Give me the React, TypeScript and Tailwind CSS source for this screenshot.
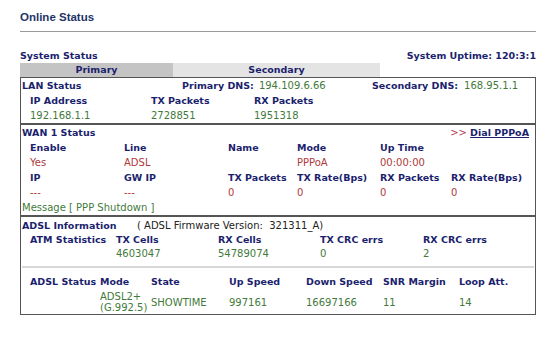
import React from "react";

const lbl = "font-bold text-[9.5px] text-[#1c1f6e]";
const grn = "text-[#3f7a3a]";
const red = "text-[#b03a3a]";

function Cell({ w, className, children }: { w: string; className?: string; children?: React.ReactNode }) {
  return <div className={`${w} shrink-0 whitespace-nowrap ${className ?? ""}`}>{children}</div>;
}

export default function App() {
  return (
    <div className="w-[560px] h-[349px] bg-white font-['DejaVu_Sans',sans-serif] text-[10px] leading-[15px] overflow-hidden">
      <div className="pl-[20px] pt-[9px] leading-[16px] font-['Liberation_Sans',sans-serif] text-[11.5px] font-bold text-[#1f3468]">
        Online Status
      </div>
      <div className="ml-[20px] mt-[6px] w-[516px] h-px bg-[#9a9a9a]" />

      <div className="ml-[20px] w-[516px] mt-[17px] flex justify-between leading-[14px]">
        <span className={lbl}>System Status</span>
        <span className={lbl}>System Uptime: 120:3:1</span>
      </div>

      <div className="ml-[20px] flex h-[14px] leading-[14px]">
        <div className={`w-[153px] bg-[#c4c4c4] text-center ${lbl}`}>Primary</div>
        <div className={`w-[207px] bg-[#e4e4e4] text-center ${lbl}`}>Secondary</div>
      </div>

      <div className="ml-[20px] w-[516px] border border-[#555]">
        {/* LAN */}
        <div>
          <div className="flex pl-[1px]">
            <Cell w="w-[160px]" className={lbl}>LAN Status</Cell>
            <div className="w-[190px] shrink-0 flex gap-[5px] whitespace-nowrap">
              <span className={lbl}>Primary DNS:</span>
              <span className={grn}>194.109.6.66</span>
            </div>
            <div className="flex gap-[6px] whitespace-nowrap">
              <span className={lbl}>Secondary DNS:</span>
              <span className={grn}>168.95.1.1</span>
            </div>
          </div>
          <div className="flex pl-[9px]">
            <Cell w="w-[121px]" className={lbl}>IP Address</Cell>
            <Cell w="w-[103px]" className={lbl}>TX Packets</Cell>
            <Cell w="w-[100px]" className={lbl}>RX Packets</Cell>
          </div>
          <div className="flex pl-[9px]">
            <Cell w="w-[121px]" className={grn}>192.168.1.1</Cell>
            <Cell w="w-[103px]" className={grn}>2728851</Cell>
            <Cell w="w-[100px]" className={grn}>1951318</Cell>
          </div>
        </div>

        {/* WAN */}
        <div className="border-t-2 border-[#555]">
          <div className="flex justify-between pl-[1px] pr-[6px]">
            <span className={lbl}>WAN 1 Status</span>
            <span className="text-[#b0405a]">
              &gt;&gt; <span className={`underline ${lbl}`}>Dial PPPoA</span>
            </span>
          </div>
          <div className="flex pl-[9px]">
            <Cell w="w-[94px]" className={lbl}>Enable</Cell>
            <Cell w="w-[104px]" className={lbl}>Line</Cell>
            <Cell w="w-[69px]" className={lbl}>Name</Cell>
            <Cell w="w-[83px]" className={lbl}>Mode</Cell>
            <Cell w="w-[71px]" className={lbl}>Up Time</Cell>
          </div>
          <div className="flex pl-[9px]">
            <Cell w="w-[94px]" className={red}>Yes</Cell>
            <Cell w="w-[104px]" className={red}>ADSL</Cell>
            <Cell w="w-[69px]" className={red}></Cell>
            <Cell w="w-[83px]" className={red}>PPPoA</Cell>
            <Cell w="w-[71px]" className={red}>00:00:00</Cell>
          </div>
          <div className="flex pl-[9px]">
            <Cell w="w-[94px]" className={lbl}>IP</Cell>
            <Cell w="w-[104px]" className={lbl}>GW IP</Cell>
            <Cell w="w-[69px]" className={lbl}>TX Packets</Cell>
            <Cell w="w-[83px]" className={lbl}>TX Rate(Bps)</Cell>
            <Cell w="w-[71px]" className={lbl}>RX Packets</Cell>
            <Cell w="w-[70px]" className={lbl}>RX Rate(Bps)</Cell>
          </div>
          <div className="flex pl-[9px]">
            <Cell w="w-[94px]" className={red}>---</Cell>
            <Cell w="w-[104px]" className={red}>---</Cell>
            <Cell w="w-[69px]" className={red}>0</Cell>
            <Cell w="w-[83px]" className={red}>0</Cell>
            <Cell w="w-[71px]" className={red}>0</Cell>
            <Cell w="w-[70px]" className={red}>0</Cell>
          </div>
          <div className={`pl-[1px] ${grn}`}>Message [ PPP Shutdown ]</div>
        </div>

        {/* ADSL */}
        <div className="border-t-2 border-[#555] pt-[2px] leading-[14px]">
          <div className="flex pl-[1px]">
            <Cell w="w-[115px]" className={lbl}>ADSL Information</Cell>
            <span className="text-[#222]">( ADSL Firmware Version:&nbsp; 321311_A)</span>
          </div>
          <div className="flex pl-[9px]">
            <Cell w="w-[86px]" className={lbl}>ATM Statistics</Cell>
            <Cell w="w-[102px]" className={lbl}>TX Cells</Cell>
            <Cell w="w-[102px]" className={lbl}>RX Cells</Cell>
            <Cell w="w-[103px]" className={lbl}>TX CRC errs</Cell>
            <Cell w="w-[80px]" className={lbl}>RX CRC errs</Cell>
          </div>
          <div className="flex pl-[9px]">
            <Cell w="w-[86px]"></Cell>
            <Cell w="w-[102px]" className={grn}>4603047</Cell>
            <Cell w="w-[102px]" className={grn}>54789074</Cell>
            <Cell w="w-[103px]" className={grn}>0</Cell>
            <Cell w="w-[80px]" className={grn}>2</Cell>
          </div>
          <div className="mx-[1px] mt-[5px] mb-[7px] h-[2px] bg-[#d8d8d8]" />
          <div className="flex pl-[9px]">
            <Cell w="w-[70px]" className={lbl}>ADSL Status</Cell>
            <Cell w="w-[51px]" className={lbl}>Mode</Cell>
            <Cell w="w-[78px]" className={lbl}>State</Cell>
            <Cell w="w-[77px]" className={lbl}>Up Speed</Cell>
            <Cell w="w-[77px]" className={lbl}>Down Speed</Cell>
            <Cell w="w-[76px]" className={lbl}>SNR Margin</Cell>
            <Cell w="w-[60px]" className={lbl}>Loop Att.</Cell>
          </div>
          <div className="flex items-center pl-[9px] pt-[2px] pb-[1px] leading-[11px]">
            <Cell w="w-[70px]"></Cell>
            <Cell w="w-[51px]" className={grn}>ADSL2+<br />(G.992.5)</Cell>
            <Cell w="w-[78px]" className={grn}>SHOWTIME</Cell>
            <Cell w="w-[77px]" className={grn}>997161</Cell>
            <Cell w="w-[77px]" className={grn}>16697166</Cell>
            <Cell w="w-[76px]" className={grn}>11</Cell>
            <Cell w="w-[60px]" className={grn}>14</Cell>
          </div>
        </div>
      </div>
    </div>
  );
}
